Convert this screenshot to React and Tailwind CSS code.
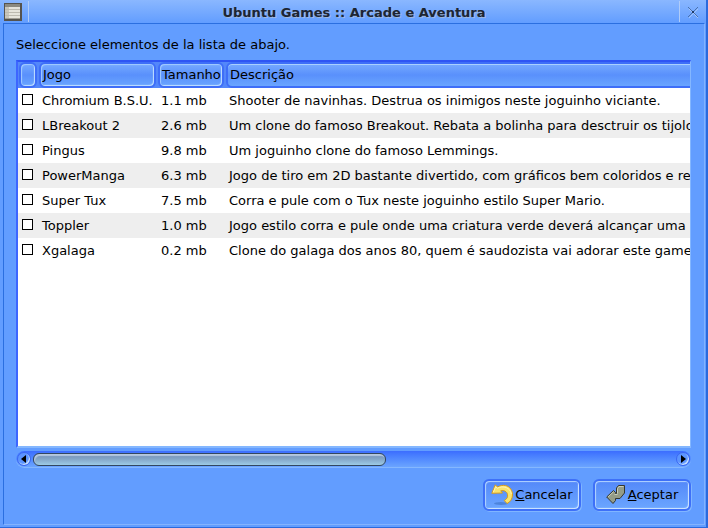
import React, { useState } from "react";
import clsx from "clsx";

const games = [
  { name: "Chromium B.S.U.", size: "1.1 mb", description: "Shooter de navinhas. Destrua os inimigos neste joguinho viciante." },
  { name: "LBreakout 2", size: "2.6 mb", description: "Um clone do famoso Breakout. Rebata a bolinha para desctruir os tijolos" },
  { name: "Pingus", size: "9.8 mb", description: "Um joguinho clone do famoso Lemmings." },
  { name: "PowerManga", size: "6.3 mb", description: "Jogo de tiro em 2D bastante divertido, com gráficos bem coloridos e rela" },
  { name: "Super Tux", size: "7.5 mb", description: "Corra e pule com o Tux neste joguinho estilo Super Mario." },
  { name: "Toppler", size: "1.0 mb", description: "Jogo estilo corra e pule onde uma criatura verde deverá alcançar uma po" },
  { name: "Xgalaga", size: "0.2 mb", description: "Clone do galaga dos anos 80, quem é saudozista vai adorar este game" },
];

const WindowIcon = () => (
  <svg width="18" height="18" viewBox="0 0 18 18" shapeRendering="crispEdges" aria-hidden="true">
    <rect width="18" height="18" fill="#55534e" />
    <rect x="1" y="1" width="15" height="3" fill="#8b8980" />
    <rect x="1" y="4" width="15" height="12" fill="#e6e4dc" />
    <rect x="1" y="4" width="4" height="12" fill="#c9c6bc" />
    <path d="M1 6.500H16M1 9.500H16M1 12.500H16" stroke="#bdbab0" />
    <path d="M1 15.500H16" stroke="#a09d94" />
  </svg>
);

const CloseIcon = () => (
  <svg width="12" height="12" viewBox="0 0 12 12" fill="none" aria-hidden="true">
    <path d="M2 3L11 12M11 3L2 12" stroke="#a3c5fb" />
    <path d="M1 1L11 11M11 1L1 11" stroke="#4a70ab" />
    <rect x="5" y="5" width="2" height="2" fill="#203a66" />
  </svg>
);

const CancelIcon = () => (
  <svg width="24" height="24" viewBox="0 0 24 24" aria-hidden="true">
    <ellipse cx="10" cy="20.500" rx="7" ry="1.500" fill="#3c71c4" opacity="0.6" />
    <path
      d="M.8 10.300L4.300 1.800L6.500 4C9 2.500 12 2 14.500 2.500C19 3.500 21.700 7.500 21.500 12C21.300 16 19.500 19 16 20.500L13.300 17.500C16 16 17 14 16.500 11.500C16 8.500 13 7 9.700 7.800L11.500 10Z"
      fill="#f9e36c"
      stroke="#d89b1c"
      strokeLinejoin="round"
    />
    <path d="M2.300 9.200L4.700 3.600L6.300 5.300C12 2.200 19.500 4.500 20.300 11" fill="none" stroke="#fff5b5" />
  </svg>
);

const AcceptIcon = () => (
  <svg width="22" height="22" viewBox="0 0 22 22" aria-hidden="true">
    <path
      d="M10.500 4L12.500 1.500H18.500V9L14 14.500H9.500V16.500L7 19.500L.7 13L7.500 6.500L9.500 8.500V9.500H10.500Z"
      fill="#949c87"
      stroke="#34372e"
      strokeLinejoin="round"
    />
    <path d="M2.200 12.800L7.500 7.800M11.500 9.500V4.500L13 2.500H17.500M8.500 10.500H11.500" fill="none" stroke="#c9cebb" />
  </svg>
);

const HeaderCell = ({ children, last }) => (
  <th scope="col" className="p-0 font-normal">
    <div
      className={clsx(
        "mx-px h-[26px] rounded-md border-2 border-[#3e6ef8] bg-linear-to-b from-[#76a9ff] via-[#5990fc] to-[#6aa5ff] pl-0.5 text-left leading-[22px]",
        last
          ? "shadow-[inset_0_1px_0_#a9d0ff]"
          : "shadow-[inset_1px_1px_1px_#a4ccff,inset_-1px_-1px_1px_#c4e2ff]"
      )}
    >
      {children}
    </div>
  </th>
);

const DialogButton = ({ icon, children }) => (
  <button
    type="button"
    className="flex h-8 w-[98px] items-center justify-center rounded-md border-2 border-[#3e70f8] bg-linear-to-b from-[#5488f9] to-[#6ba6ff] shadow-[inset_1px_1px_1px_#b4d5ff,inset_-1px_-1px_1px_#d2e8ff,1px_1px_0_#80b5ff]"
  >
    {icon}
    <span>{children}</span>
  </button>
);

const ScrollArrow = ({ label, points }) => (
  <button
    type="button"
    aria-label={label}
    className="flex size-[14px] shrink-0 items-center justify-center rounded-full border border-[#3a66f2] bg-[#5b94ff] shadow-[inset_-1px_-1px_1px_#d8ecff]"
  >
    <svg width="8" height="8" viewBox="0 0 8 8" aria-hidden="true">
      <polygon points={points} fill="#000" />
    </svg>
  </button>
);

const App = () => {
  const [selected, setSelected] = useState([]);

  const toggle = (name) => {
    setSelected((prev) => (prev.includes(name) ? prev.filter((n) => n !== name) : [...prev, name]));
  };

  return (
    <div className="flex min-h-screen flex-col border-r-2 border-b border-[#2b6adc] bg-[#629dff] font-['DejaVu_Sans',sans-serif] text-[13px] text-black">
      <header className="flex h-[23px] items-stretch bg-linear-to-b from-[#8ab7ff] to-[#629dff]">
        <div className="flex w-7 items-center pl-1">
          <WindowIcon />
        </div>
        <div className="my-px border-l border-[#b0ccf8]" />
        <h1 className="flex-1 text-center font-bold leading-[25px] text-[#1d2533] [text-shadow:1px_1px_0_#a0b8df]">
          Ubuntu Games :: Arcade e Aventura
        </h1>
        <div className="my-px border-l border-[#b0ccf8]" />
        <button type="button" aria-label="Cerrar" className="flex w-[26px] items-center justify-center">
          <CloseIcon />
        </button>
      </header>

      <main className="mr-px mb-[2px] ml-[3px] flex flex-1 flex-col border border-t-[#2b6fe0] border-r-[#83b3ff] border-b-[#83b3ff] border-l-[#2b6fe0] pt-3 pr-[13px] pb-[13px] pl-3">
        <p className="leading-[18px]">Seleccione elementos de la lista de abajo.</p>

        <div className="mt-[6px] flex flex-1 flex-col overflow-hidden border-t-2 border-r border-b-2 border-l-2 border-t-[#2e55f4] border-r-[#84b7ff] border-b-[#84b7ff] border-l-[#3d66ff] bg-white">
          <table className="w-[800px] table-fixed border-collapse whitespace-nowrap">
            <colgroup>
              <col className="w-5" />
              <col className="w-[119px]" />
              <col className="w-[68px]" />
              <col />
            </colgroup>
            <thead className="bg-[#5387fa]">
              <tr>
                <HeaderCell />
                <HeaderCell>Jogo</HeaderCell>
                <HeaderCell>Tamanho</HeaderCell>
                <HeaderCell last>Descrição</HeaderCell>
              </tr>
            </thead>
            <tbody>
              {games.map((game) => (
                <tr key={game.name} className="h-[25px] even:bg-[#eeeeee]">
                  <td className="p-0 pb-0.5 pl-1">
                    <input
                      type="checkbox"
                      aria-label={game.name}
                      checked={selected.includes(game.name)}
                      onChange={() => toggle(game.name)}
                      className="block size-[11px] appearance-none border border-black bg-white checked:bg-black"
                    />
                  </td>
                  <td className="p-0 pl-1">{game.name}</td>
                  <td className="p-0 pl-1">{game.size}</td>
                  <td className="p-0 pl-1">{game.description}</td>
                </tr>
              ))}
            </tbody>
          </table>
        </div>

        <div className="mt-[3px] flex h-[17px] items-center gap-[2px] rounded-full border-b border-[#84b7ff] bg-linear-to-b from-[#3c6dff] to-[#6ba4ff] px-px">
          <ScrollArrow label="Izquierda" points="6,0 6,8 1,4" />
          <div className="flex-1">
            <div className="h-[13px] w-[55%] rounded-md border border-[#33475f] bg-linear-to-b from-[#708bb5] via-[#86a9ca] to-[#9dcbe5] shadow-[inset_1px_2px_1px_#b4c8e0]" />
          </div>
          <ScrollArrow label="Derecha" points="2,0 2,8 7,4" />
        </div>

        <div className="mt-[11px] flex justify-end gap-3">
          <DialogButton icon={<CancelIcon />}>
            <u>C</u>ancelar
          </DialogButton>
          <DialogButton icon={<AcceptIcon />}>
            <u>A</u>ceptar
          </DialogButton>
        </div>
      </main>
    </div>
  );
};

export default App;
